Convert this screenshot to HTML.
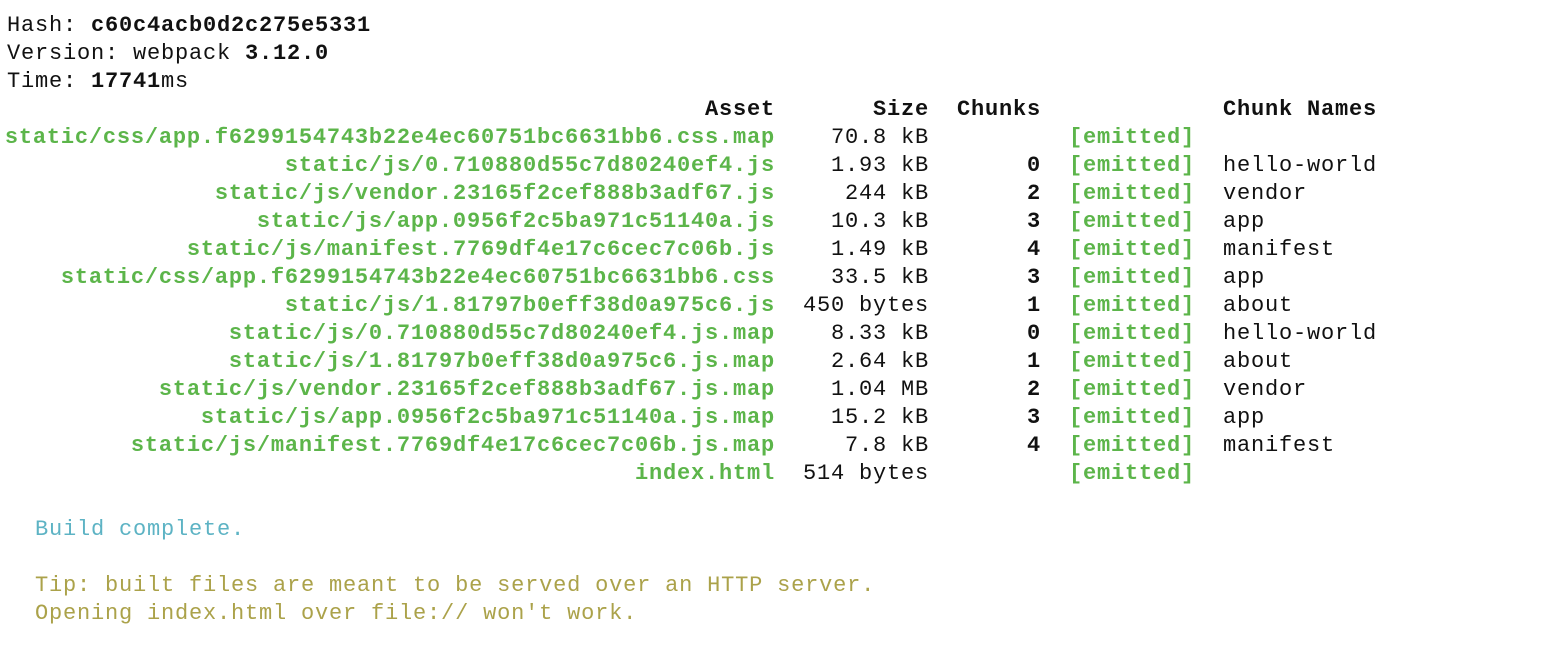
<!DOCTYPE html>
<html><head><meta charset="utf-8"><style>
html,body{margin:0;padding:0;background:#fff;width:1558px;height:646px;overflow:hidden}
body{font-family:"Liberation Mono","DejaVu Sans Mono",monospace;font-size:22px;letter-spacing:0.8px;color:#111;position:relative}
.l{position:absolute;left:0;height:28px;line-height:28px;width:1558px;white-space:pre}
.a{position:absolute;right:783px;font-weight:bold;color:#5cb54a}
.s{position:absolute;right:629px}
.c{position:absolute;right:517px;font-weight:bold}
.e{position:absolute;left:1069px;font-weight:bold;color:#5cb54a}
.n{position:absolute;left:1223px}
.h{font-weight:bold;color:#111}
b{font-weight:bold}
</style></head><body>
<div class="l" style="top:12px;left:7px">Hash: <b>c60c4acb0d2c275e5331</b></div>
<div class="l" style="top:40px;left:7px">Version: webpack <b>3.12.0</b></div>
<div class="l" style="top:68px;left:7px">Time: <b>17741</b>ms</div>
<div class="l" style="top:96px"><span class="a h">Asset</span><span class="s h">Size</span><span class="c">Chunks</span><span class="n h">Chunk Names</span></div>
<div class="l" style="top:124px"><span class="a">static/css/app.f6299154743b22e4ec60751bc6631bb6.css.map</span><span class="s">70.8 kB</span><span class="e">[emitted]</span></div>
<div class="l" style="top:152px"><span class="a">static/js/0.710880d55c7d80240ef4.js</span><span class="s">1.93 kB</span><span class="c">0</span><span class="e">[emitted]</span><span class="n">hello-world</span></div>
<div class="l" style="top:180px"><span class="a">static/js/vendor.23165f2cef888b3adf67.js</span><span class="s">244 kB</span><span class="c">2</span><span class="e">[emitted]</span><span class="n">vendor</span></div>
<div class="l" style="top:208px"><span class="a">static/js/app.0956f2c5ba971c51140a.js</span><span class="s">10.3 kB</span><span class="c">3</span><span class="e">[emitted]</span><span class="n">app</span></div>
<div class="l" style="top:236px"><span class="a">static/js/manifest.7769df4e17c6cec7c06b.js</span><span class="s">1.49 kB</span><span class="c">4</span><span class="e">[emitted]</span><span class="n">manifest</span></div>
<div class="l" style="top:264px"><span class="a">static/css/app.f6299154743b22e4ec60751bc6631bb6.css</span><span class="s">33.5 kB</span><span class="c">3</span><span class="e">[emitted]</span><span class="n">app</span></div>
<div class="l" style="top:292px"><span class="a">static/js/1.81797b0eff38d0a975c6.js</span><span class="s">450 bytes</span><span class="c">1</span><span class="e">[emitted]</span><span class="n">about</span></div>
<div class="l" style="top:320px"><span class="a">static/js/0.710880d55c7d80240ef4.js.map</span><span class="s">8.33 kB</span><span class="c">0</span><span class="e">[emitted]</span><span class="n">hello-world</span></div>
<div class="l" style="top:348px"><span class="a">static/js/1.81797b0eff38d0a975c6.js.map</span><span class="s">2.64 kB</span><span class="c">1</span><span class="e">[emitted]</span><span class="n">about</span></div>
<div class="l" style="top:376px"><span class="a">static/js/vendor.23165f2cef888b3adf67.js.map</span><span class="s">1.04 MB</span><span class="c">2</span><span class="e">[emitted]</span><span class="n">vendor</span></div>
<div class="l" style="top:404px"><span class="a">static/js/app.0956f2c5ba971c51140a.js.map</span><span class="s">15.2 kB</span><span class="c">3</span><span class="e">[emitted]</span><span class="n">app</span></div>
<div class="l" style="top:432px"><span class="a">static/js/manifest.7769df4e17c6cec7c06b.js.map</span><span class="s">7.8 kB</span><span class="c">4</span><span class="e">[emitted]</span><span class="n">manifest</span></div>
<div class="l" style="top:460px"><span class="a">index.html</span><span class="s">514 bytes</span><span class="e">[emitted]</span></div>
<div class="l" style="top:516px;left:35px;color:#5db3c4">Build complete.</div>
<div class="l" style="top:572px;left:35px;color:#aba24a">Tip: built files are meant to be served over an HTTP server.</div>
<div class="l" style="top:600px;left:35px;color:#aba24a">Opening index.html over file:// won't work.</div>
</body></html>
